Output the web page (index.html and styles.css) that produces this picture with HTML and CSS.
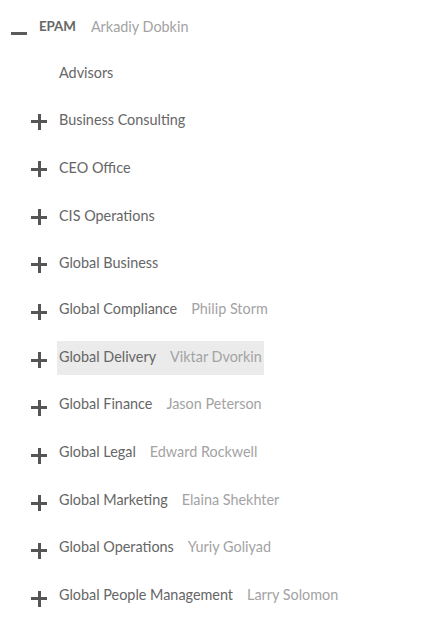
FILE: index.html
```html
<!DOCTYPE html>
<html lang="en">
<head>
<meta charset="utf-8">
<link rel="stylesheet" href="styles.css">
</head>
<body>
<div class="tree">
  <div class="row root">
    <span class="icon minus"></span>
    <span class="label mgr"><b class="name">EPAM</b><span class="head">Arkadiy Dobkin</span></span>
  </div>
  <div class="children">
    <div class="row leaf"><span class="icon none"></span><span class="label"><span class="name">Advisors</span></span></div>
    <div class="row"><span class="icon plus"></span><span class="label"><span class="name">Business Consulting</span></span></div>
    <div class="row"><span class="icon plus"></span><span class="label"><span class="name">CEO Office</span></span></div>
    <div class="row"><span class="icon plus"></span><span class="label"><span class="name">CIS Operations</span></span></div>
    <div class="row"><span class="icon plus"></span><span class="label"><span class="name">Global Business</span></span></div>
    <div class="row"><span class="icon plus"></span><span class="label mgr"><span class="name">Global Compliance</span><span class="head">Philip Storm</span></span></div>
    <div class="row"><span class="icon plus"></span><span class="label mgr selected"><span class="name">Global Delivery</span><span class="head">Viktar Dvorkin</span></span></div>
    <div class="row"><span class="icon plus"></span><span class="label mgr"><span class="name">Global Finance</span><span class="head">Jason Peterson</span></span></div>
    <div class="row"><span class="icon plus"></span><span class="label mgr"><span class="name">Global Legal</span><span class="head">Edward Rockwell</span></span></div>
    <div class="row"><span class="icon plus"></span><span class="label mgr"><span class="name">Global Marketing</span><span class="head">Elaina Shekhter</span></span></div>
    <div class="row"><span class="icon plus"></span><span class="label mgr"><span class="name">Global Operations</span><span class="head">Yuriy Goliyad</span></span></div>
    <div class="row"><span class="icon plus"></span><span class="label mgr"><span class="name">Global People Management</span><span class="head">Larry Solomon</span></span></div>
  </div>
</div>
</body>
</html>
```
FILE: styles.css
```css
html, body {
  margin: 0;
  padding: 0;
  background: #fff;
}
body {
  font-family: Lato, "Liberation Sans", sans-serif;
  font-size: 14.4px;
  color: #666;
}
.tree {
  padding-top: 11px;
}
.row {
  display: flex;
  align-items: center;
  height: 34px;
  margin-bottom: 13.7px;
  gap: 10px;
}
.root {
  padding-left: 11px;
  margin-bottom: 10px;
}
.children .row {
  padding-left: 31px;
}
.icon {
  position: relative;
  width: 16px;
  height: 16px;
  flex: none;
  margin-top: 4px;
}
.icon::before,
.icon::after {
  content: "";
  position: absolute;
  background: #555;
}
.icon::before {
  left: 0;
  top: 6.5px;
  width: 16px;
  height: 3px;
}
.plus::after {
  left: 6.5px;
  top: 0;
  width: 3px;
  height: 16px;
}
.root .icon {
  margin-top: 10px;
}
.root .icon::before {
  background: #5a5a5a;
}
.none::before { display: none; }
.label {
  display: flex;
  align-items: center;
  height: 34px;
  padding: 0 2px;
  white-space: nowrap;
  box-sizing: border-box;
}
.label.mgr {
  padding-bottom: 4px;
}
.name {
  color: #666;
}
b.name {
  font-weight: 700;
  font-size: 13.4px;
  letter-spacing: -0.1px;
}
.head {
  margin-left: 14px;
  color: #a3a3a3;
}
.root .head {
  margin-left: 15px;
}
.selected {
  background: #ebebeb;
}
```
